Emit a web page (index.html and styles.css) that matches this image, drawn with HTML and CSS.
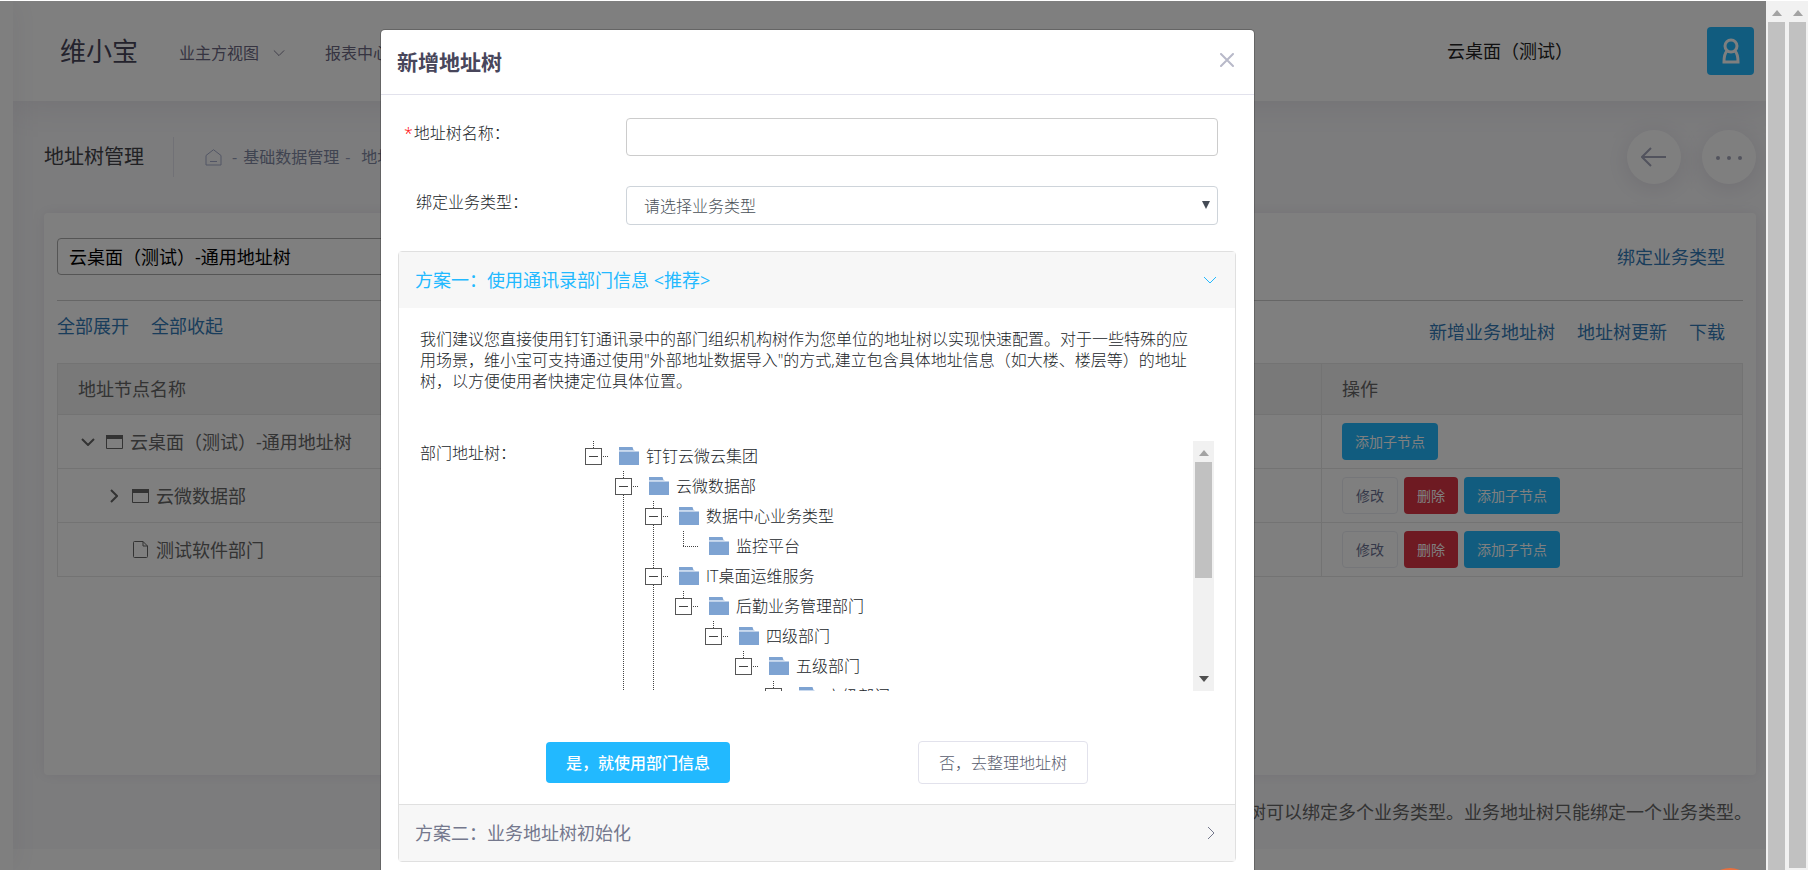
FILE: index.html
```html
<!DOCTYPE html>
<html lang="zh-CN">
<head>
<meta charset="utf-8">
<title>地址树管理</title>
<link rel="stylesheet" href="styles.css">
</head>
<body>
<svg class="defs" aria-hidden="true">
  <symbol id="i-down" viewBox="0 0 14 8"><path d="M1 1l6 6 6-6" fill="none" stroke="currentColor"/></symbol>
  <symbol id="i-right" viewBox="0 0 8 14"><path d="M1 1l6 6-6 6" fill="none" stroke="currentColor"/></symbol>
  <symbol id="i-window" viewBox="0 0 17 14"><path d="M.5.5h16v13H.5z" fill="none" stroke="currentColor"/><path d="M0 0h17v4H0z" fill="currentColor"/></symbol>
  <symbol id="i-file" viewBox="0 0 15 17"><path d="M1.500.5h8.500l4.500 4.500v10.500a1 1 0 0 1-1 1h-12a1 1 0 0 1-1-1v-14a1 1 0 0 1 1-1zM10 .5V5h4.500" fill="none" stroke="currentColor"/></symbol>
  <symbol id="i-folder" viewBox="0 0 20 18"><path d="M0 0h13.500l1 3H0z" fill="#7ea3d2"/><path d="M0 3h15l1 1H0z" fill="#c9d9ee"/><path d="M0 4.500h20V18H0z" fill="#7ea3d2"/></symbol>
  <symbol id="i-up-tri" viewBox="0 0 10 6"><path d="M0 6l5-6 5 6z" fill="currentColor"/></symbol>
  <symbol id="i-down-tri" viewBox="0 0 10 6"><path d="M0 0h10l-5 6z" fill="currentColor"/></symbol>
</svg>

<div class="window">
  <div class="app">
    <div class="aside-edge"></div>
    <div class="page">
      <header class="topbar">
        <div class="logo">维小宝</div>
        <nav class="nav">
          <a href="#" class="nav-link">业主方视图<svg class="nav-caret" viewBox="0 0 14 8"><use href="#i-down"/></svg></a>
          <a href="#" class="nav-link">报表中心</a>
        </nav>
        <div class="tenant">云桌面（测试）</div>
        <button class="user" type="button" aria-label="用户">
          <svg viewBox="0 0 18 26"><circle cx="9" cy="8" r="6" /><path d="M5 13c-2 2-3 5-3 11h14c0-6-1-9-3-11"/></svg>
        </button>
      </header>

      <div class="subheader">
        <h1 class="page-title">地址树管理</h1>
        <div class="crumbs">
          <svg class="home" viewBox="0 0 17 17"><path d="M1 6.500L8.500.7 16 6.500V16H1zM5 12.500h7" fill="none" stroke="currentColor"/></svg>
          <span>-</span><a href="#">基础数据管理</a><span>-</span><a href="#" class="crumb-last">地址树管理</a>
        </div>
        <div class="tools">
          <button class="round" type="button" aria-label="返回"><svg viewBox="0 0 26 20"><path d="M25 10H2M10 1l-9 9 9 9" fill="none" stroke="currentColor" stroke-width="2"/></svg></button>
          <button class="round" type="button" aria-label="更多"><svg viewBox="0 0 26 20"><circle cx="2" cy="11" r="2"/><circle cx="13" cy="11" r="2"/><circle cx="24" cy="11" r="2"/></svg></button>
        </div>
      </div>

      <main class="card">
        <div class="card-top">
          <select class="tree-select" aria-label="地址树"><option>云桌面（测试）-通用地址树</option></select>
          <a href="#">绑定业务类型</a>
        </div>
        <div class="card-links">
          <div class="links links-left"><a href="#">全部展开</a><a href="#">全部收起</a></div>
          <div class="links links-right"><a href="#">新增业务地址树</a><a href="#">地址树更新</a><a href="#">下载</a></div>
        </div>
        <table class="grid">
          <thead><tr><th>地址节点名称</th><th class="col-ops">操作</th></tr></thead>
          <tbody>
            <tr>
              <td><div class="node"><svg class="caret-d" viewBox="0 0 14 8"><use href="#i-down"/></svg><svg class="win"><use href="#i-window"/></svg>云桌面（测试）-通用地址树</div></td>
              <td><div class="ops"><button class="sm blue" type="button">添加子节点</button></div></td>
            </tr>
            <tr>
              <td><div class="node node-child"><svg class="caret-r" viewBox="0 0 8 14"><use href="#i-right"/></svg><svg class="win"><use href="#i-window"/></svg>云微数据部</div></td>
              <td><div class="ops"><button class="sm plain" type="button">修改</button><button class="sm red" type="button">删除</button><button class="sm blue" type="button">添加子节点</button></div></td>
            </tr>
            <tr>
              <td><div class="node node-leaf"><svg class="file"><use href="#i-file"/></svg>测试软件部门</div></td>
              <td><div class="ops"><button class="sm plain" type="button">修改</button><button class="sm red" type="button">删除</button><button class="sm blue" type="button">添加子节点</button></div></td>
            </tr>
          </tbody>
        </table>
      </main>
      <p class="note">通用地址树可以绑定多个业务类型。业务地址树只能绑定一个业务类型。</p>
      <footer class="footer"></footer>
    </div>

    <div class="overlay">
      <section class="modal" role="dialog" aria-modal="true" aria-labelledby="dlg-title">
        <header class="modal-head">
          <h2 id="dlg-title">新增地址树</h2>
          <button class="close" type="button" aria-label="关闭"><svg viewBox="0 0 14 14"><path d="M1 1l12 12M13 1L1 13" fill="none" stroke="currentColor" stroke-width="2" stroke-linecap="round"/></svg></button>
        </header>
        <form class="fields">
          <label for="f-name" class="req"><span class="star">*</span>地址树名称：</label>
          <input id="f-name" type="text">
          <label for="f-type">绑定业务类型：</label>
          <div class="select-box">
            <select id="f-type"><option>请选择业务类型</option></select>
            <svg viewBox="0 0 8 8"><path d="M0 0h8L4 8z" fill="#444b55"/></svg>
          </div>
        </form>
        <div class="accordion">
          <button class="acc-head acc-open" type="button" aria-expanded="true">方案一：使用通讯录部门信息 &lt;推荐&gt;<svg class="acc-d"><use href="#i-down"/></svg></button>
          <div class="acc-body">
            <p class="advice">我们建议您直接使用钉钉通讯录中的部门组织机构树作为您单位的地址树以实现快速配置。对于一些特殊的应用场景，维小宝可支持通过使用"外部地址数据导入"的方式,建立包含具体地址信息（如大楼、楼层等）的地址树，以方便使用者快捷定位具体位置。</p>
            <div class="tree-row">
              <div class="tree-label">部门地址树：</div>
              <div class="tree-view">
                <ul class="tree">
                  <li><div class="item"><span class="slot"><button type="button" aria-label="收起"></button></span><svg><use href="#i-folder"/></svg>钉钉云微云集团</div>
                    <ul>
                      <li><div class="item"><span class="slot"><button type="button" aria-label="收起"></button></span><svg><use href="#i-folder"/></svg>云微数据部</div>
                        <ul>
                          <li><div class="item"><span class="slot"><button type="button" aria-label="收起"></button></span><svg><use href="#i-folder"/></svg>数据中心业务类型</div>
                            <ul>
                              <li><div class="item"><span class="slot"></span><svg><use href="#i-folder"/></svg>监控平台</div></li>
                            </ul>
                          </li>
                          <li><div class="item"><span class="slot"><button type="button" aria-label="收起"></button></span><svg><use href="#i-folder"/></svg>IT桌面运维服务</div>
                            <ul>
                              <li><div class="item"><span class="slot"><button type="button" aria-label="收起"></button></span><svg><use href="#i-folder"/></svg>后勤业务管理部门</div>
                                <ul>
                                  <li><div class="item"><span class="slot"><button type="button" aria-label="收起"></button></span><svg><use href="#i-folder"/></svg>四级部门</div>
                                    <ul>
                                      <li><div class="item"><span class="slot"><button type="button" aria-label="收起"></button></span><svg><use href="#i-folder"/></svg>五级部门</div>
                                        <ul>
                                          <li><div class="item"><span class="slot"><button type="button" aria-label="收起"></button></span><svg><use href="#i-folder"/></svg>六级部门</div></li>
                                        </ul>
                                      </li>
                                    </ul>
                                  </li>
                                </ul>
                              </li>
                            </ul>
                          </li>
                          <li></li>
                        </ul>
                      </li>
                      <li></li>
                    </ul>
                  </li>
                </ul>
                <div class="bar bar-tree"><svg class="tri"><use href="#i-up-tri"/></svg><div class="thumb"></div><svg class="tri tri-dark"><use href="#i-down-tri"/></svg></div>
              </div>
            </div>
            <div class="choices">
              <button class="yes" type="button">是，就使用部门信息</button>
              <button class="no" type="button">否，去整理地址树</button>
            </div>
          </div>
          <button class="acc-head acc-closed" type="button" aria-expanded="false">方案二：业务地址树初始化<svg class="acc-r" viewBox="0 0 8 14"><use href="#i-right"/></svg></button>
        </div>
      </section>
    </div>
    <div class="fab"></div>
  </div>
  <div class="bar"><svg class="tri"><use href="#i-up-tri"/></svg><div class="thumb"></div></div>
  <div class="bar bar-outer"><svg class="tri"><use href="#i-up-tri"/></svg><div class="thumb"></div></div>
</div>
</body>
</html>
```

FILE: styles.css
```css
* { box-sizing: border-box; }
body {
  margin: 0;
  font: 300 16px/24px "Open Sans", "Noto Sans CJK SC", sans-serif;
  color: #212529;
}
button, input, select { font: inherit; margin: 0; }
button { cursor: pointer; }
a { color: #337ab7; text-decoration: none; }
h1, h2, p, ul { margin: 0; padding: 0; }
ul { list-style: none; }
svg { flex: none; }
.defs { position: absolute; width: 0; height: 0; }

.window { display: flex; height: 100vh; padding-top: 1px; overflow: hidden; background: #fff; }
.app { position: relative; flex: 1; min-width: 0; display: flex; overflow: hidden; }
.aside-edge { width: 13px; flex: none; background: #fff; box-shadow: 0 0 28px rgba(82, 63, 105, .12); z-index: 1; }
.page { flex: 1; min-width: 0; display: flex; flex-direction: column; background: #f9f9fb; font-weight: 400; }

/* top bar */
.topbar { display: flex; align-items: center; height: 100px; flex: none; padding: 0 12px 0 47px; background: #fff; box-shadow: 0 0 40px rgba(82, 63, 105, .14); }
.logo { font-size: 26px; line-height: 40px; color: #48465b; }
.nav { display: flex; gap: 40px; margin: 3px 0 0 41px; }
.nav-link { display: flex; align-items: center; color: #6c6883; }
.nav-caret { width: 12px; height: 8px; margin-left: 14px; }
.tenant { margin-left: auto; font-size: 18px; color: #222; }
.user { display: flex; align-items: center; justify-content: center; width: 47px; height: 48px; margin: 0 0 0 134px; border: 0; border-radius: 4px; background: #22b9ff; }
.user svg { width: 18px; height: 26px; fill: none; stroke: #fff; stroke-width: 3; }

/* page title row */
.subheader { display: flex; align-items: center; height: 112px; flex: none; padding: 0 10px 0 31px; }
.page-title { font-size: 20px; font-weight: 400; line-height: 40px; color: #434349; padding-right: 29px; border-right: 1px solid #e2e2ec; }
.crumbs { display: flex; align-items: center; gap: 6px; margin-left: 31px; color: #959cb6; }
.crumbs a { color: #8188a2; }
.crumbs .crumb-last { margin-left: 5px; }
.home { width: 17px; height: 17px; margin-right: 4px; color: #a4abca; }
.tools { display: flex; gap: 21px; margin-left: auto; }
.round { display: flex; align-items: center; justify-content: center; width: 54px; height: 54px; padding: 0; border: 0; border-radius: 50%; background: #fff; color: #a4a7bb; box-shadow: 0 4px 25px rgba(82, 63, 105, .14); }
.round svg { width: 26px; height: 20px; fill: currentColor; }

/* card */
.card { flex: none; min-height: 562px; margin: 0 10px 0 31px; padding: 25px 13px 0; border-radius: 4px; background: #fff; box-shadow: 0 0 13px rgba(82, 63, 105, .1); font-size: 18px; }
.card-top { display: flex; align-items: center; justify-content: space-between; padding: 0 18px 25px 0; border-bottom: 1px solid #ccc; }
.tree-select { appearance: none; width: 600px; height: 37px; padding: 0 11px; border: 1px solid #aaa; border-radius: 4px; background: #fff; color: #000; }
.card-links { display: flex; justify-content: space-between; height: 62px; padding-right: 18px; }
.links { display: flex; gap: 22px; padding-top: 13px; }
.links-right { padding-top: 19px; }
.grid { width: 100%; border-collapse: collapse; table-layout: fixed; color: #666; }
.grid th, .grid td { height: 54px; padding: 0 20px; border: 1px solid #e6e6e6; text-align: left; font-weight: 400; }
.grid th { height: 51px; background: #f2f2f2; }
.grid .col-ops { width: 421px; }
.node { display: flex; align-items: center; padding-left: 3px; }
.node svg { overflow: visible; }
.node-child { padding-left: 32px; }
.node-leaf { padding-left: 55px; }
.caret-d { width: 14px; height: 8px; margin-right: 11px; stroke-width: 2; }
.caret-r { width: 8px; height: 14px; margin-right: 14px; stroke-width: 2; }
.win { width: 17px; height: 14px; margin-right: 7px; }
.file { width: 15px; height: 17px; margin-right: 8px; }
.ops { display: flex; gap: 6px; }
.sm { height: 37px; padding: 0 12px; border: 1px solid transparent; border-radius: 4px; font-size: 14px; color: #fff; }
.blue { background: #22b9ff; }
.red { background: #dc3545; }
.plain { padding: 0 13px; background: #fff; border-color: #ebedf2; color: #6c7293; }
.note { flex: none; padding: 25px 14px 24px; font-size: 18px; line-height: 25px; color: #666; text-align: right; white-space: nowrap; }
.footer { flex: 1; min-height: 21px; background: #fff; }

/* dialog */
.overlay { position: absolute; inset: 0; z-index: 2; padding: 29px 20px 0 381px; background: rgba(0, 0, 0, .5); overflow: hidden; }
.modal { max-width: 873px; min-height: 900px; background: #fff; border-radius: 4px; box-shadow: 0 0 0 1px rgba(0, 0, 0, .2); }
.modal-head { display: flex; align-items: center; justify-content: space-between; height: 65px; padding: 0 20px 0 16px; border-bottom: 1px solid #e2e2ec; }
.modal-head h2 { font-size: 21px; line-height: 30px; font-weight: 700; color: #48465b; }
.close { display: flex; padding: 0; border: 0; background: none; color: #b8b9c9; margin-bottom: 4px; }
.close svg { width: 14px; height: 14px; }
.fields { display: grid; grid-template-columns: 210px 1fr; row-gap: 30px; padding: 23px 36px 26px 35px; }
.fields label { padding-top: 4px; }
.fields .req { padding-top: 3px; margin-left: -12px; }
.star { color: #f00; margin-right: 1px; }
.fields input, .fields select { appearance: none; display: block; width: 100%; height: 38px; padding: 0 17px; border: 1px solid #ccc; border-radius: 4px; background: #fff; color: #495057; }
.fields select { border-color: #ced4da; height: 39px; }
.select-box { position: relative; }
.select-box svg { position: absolute; right: 8px; top: 15px; width: 8px; height: 8px; }

.accordion { margin: 0 18px 0 17px; border: 1px solid #e0e0e0; border-radius: 4px; }
.acc-head { display: flex; align-items: center; justify-content: space-between; width: 100%; height: 56px; padding: 0 18px 0 16px; border: 0; background: #f7f7f7; font-size: 18px; font-weight: 400; text-align: left; }
.acc-open { color: #22b9ff; }
.acc-closed { color: #74788d; border-top: 1px solid #e0e0e0; height: 57px; }
.acc-d { width: 14px; height: 8px; }
.acc-r { width: 8px; height: 14px; margin-right: 2px; }
.acc-body { padding: 21px 21px 20px; }
.advice { line-height: 21px; padding-right: 12px; }
.tree-row { display: flex; margin-top: 49px; }
.tree-label { width: 165px; flex: none; }
.tree-view { flex: 1; display: flex; justify-content: space-between; height: 250px; overflow: hidden; }
.tree ul { padding-left: 30px; }
.tree li { min-height: 30px; background: repeating-linear-gradient(#444 0 1px, transparent 1px 2px) 8px 0 / 1px 100% no-repeat; }
.tree li:last-child { background-size: 1px 16px; }
.item { display: flex; align-items: center; height: 30px; white-space: nowrap; }
.item svg { width: 20px; height: 18px; margin-right: 7px; }
.slot { display: flex; width: 34px; height: 17px; background: repeating-linear-gradient(90deg, #444 0 1px, transparent 1px 2px) 8px 8px / 16px 1px no-repeat; }
.slot button { width: 17px; height: 17px; padding: 0; border: 1px solid #555; background: linear-gradient(#444, #444) center / 9px 1px no-repeat #fff; }
.choices { display: flex; gap: 188px; align-items: center; padding: 50px 0 0 126px; }
.yes, .no { border-radius: 4px; }
.yes { height: 41px; padding: 0 20px; border: 0; background: #22b9ff; color: #fff; font-weight: 500; }
.no { height: 43px; padding: 0 20px; border: 1px solid #e2e2ec; background: #fff; color: #595d6e; }

/* scroll bars */
.bar { display: flex; flex-direction: column; align-items: center; width: 21px; flex: none; padding-top: 9px; background: #f1f1f1; color: #a3a3a3; }
.bar .thumb { width: 17px; flex: 1; margin-top: 6px; background: #c1c1c1; }
.tri { width: 10px; height: 6px; }
.bar-outer { padding-bottom: 2px; }
.bar-tree .thumb { flex: none; height: 116px; }
.bar-tree .tri-dark { margin: auto 0 9px; color: #505050; }
.fab { position: absolute; right: 12px; bottom: -46px; width: 48px; height: 48px; border-radius: 50%; background: #e8703f; z-index: 3; }
```
